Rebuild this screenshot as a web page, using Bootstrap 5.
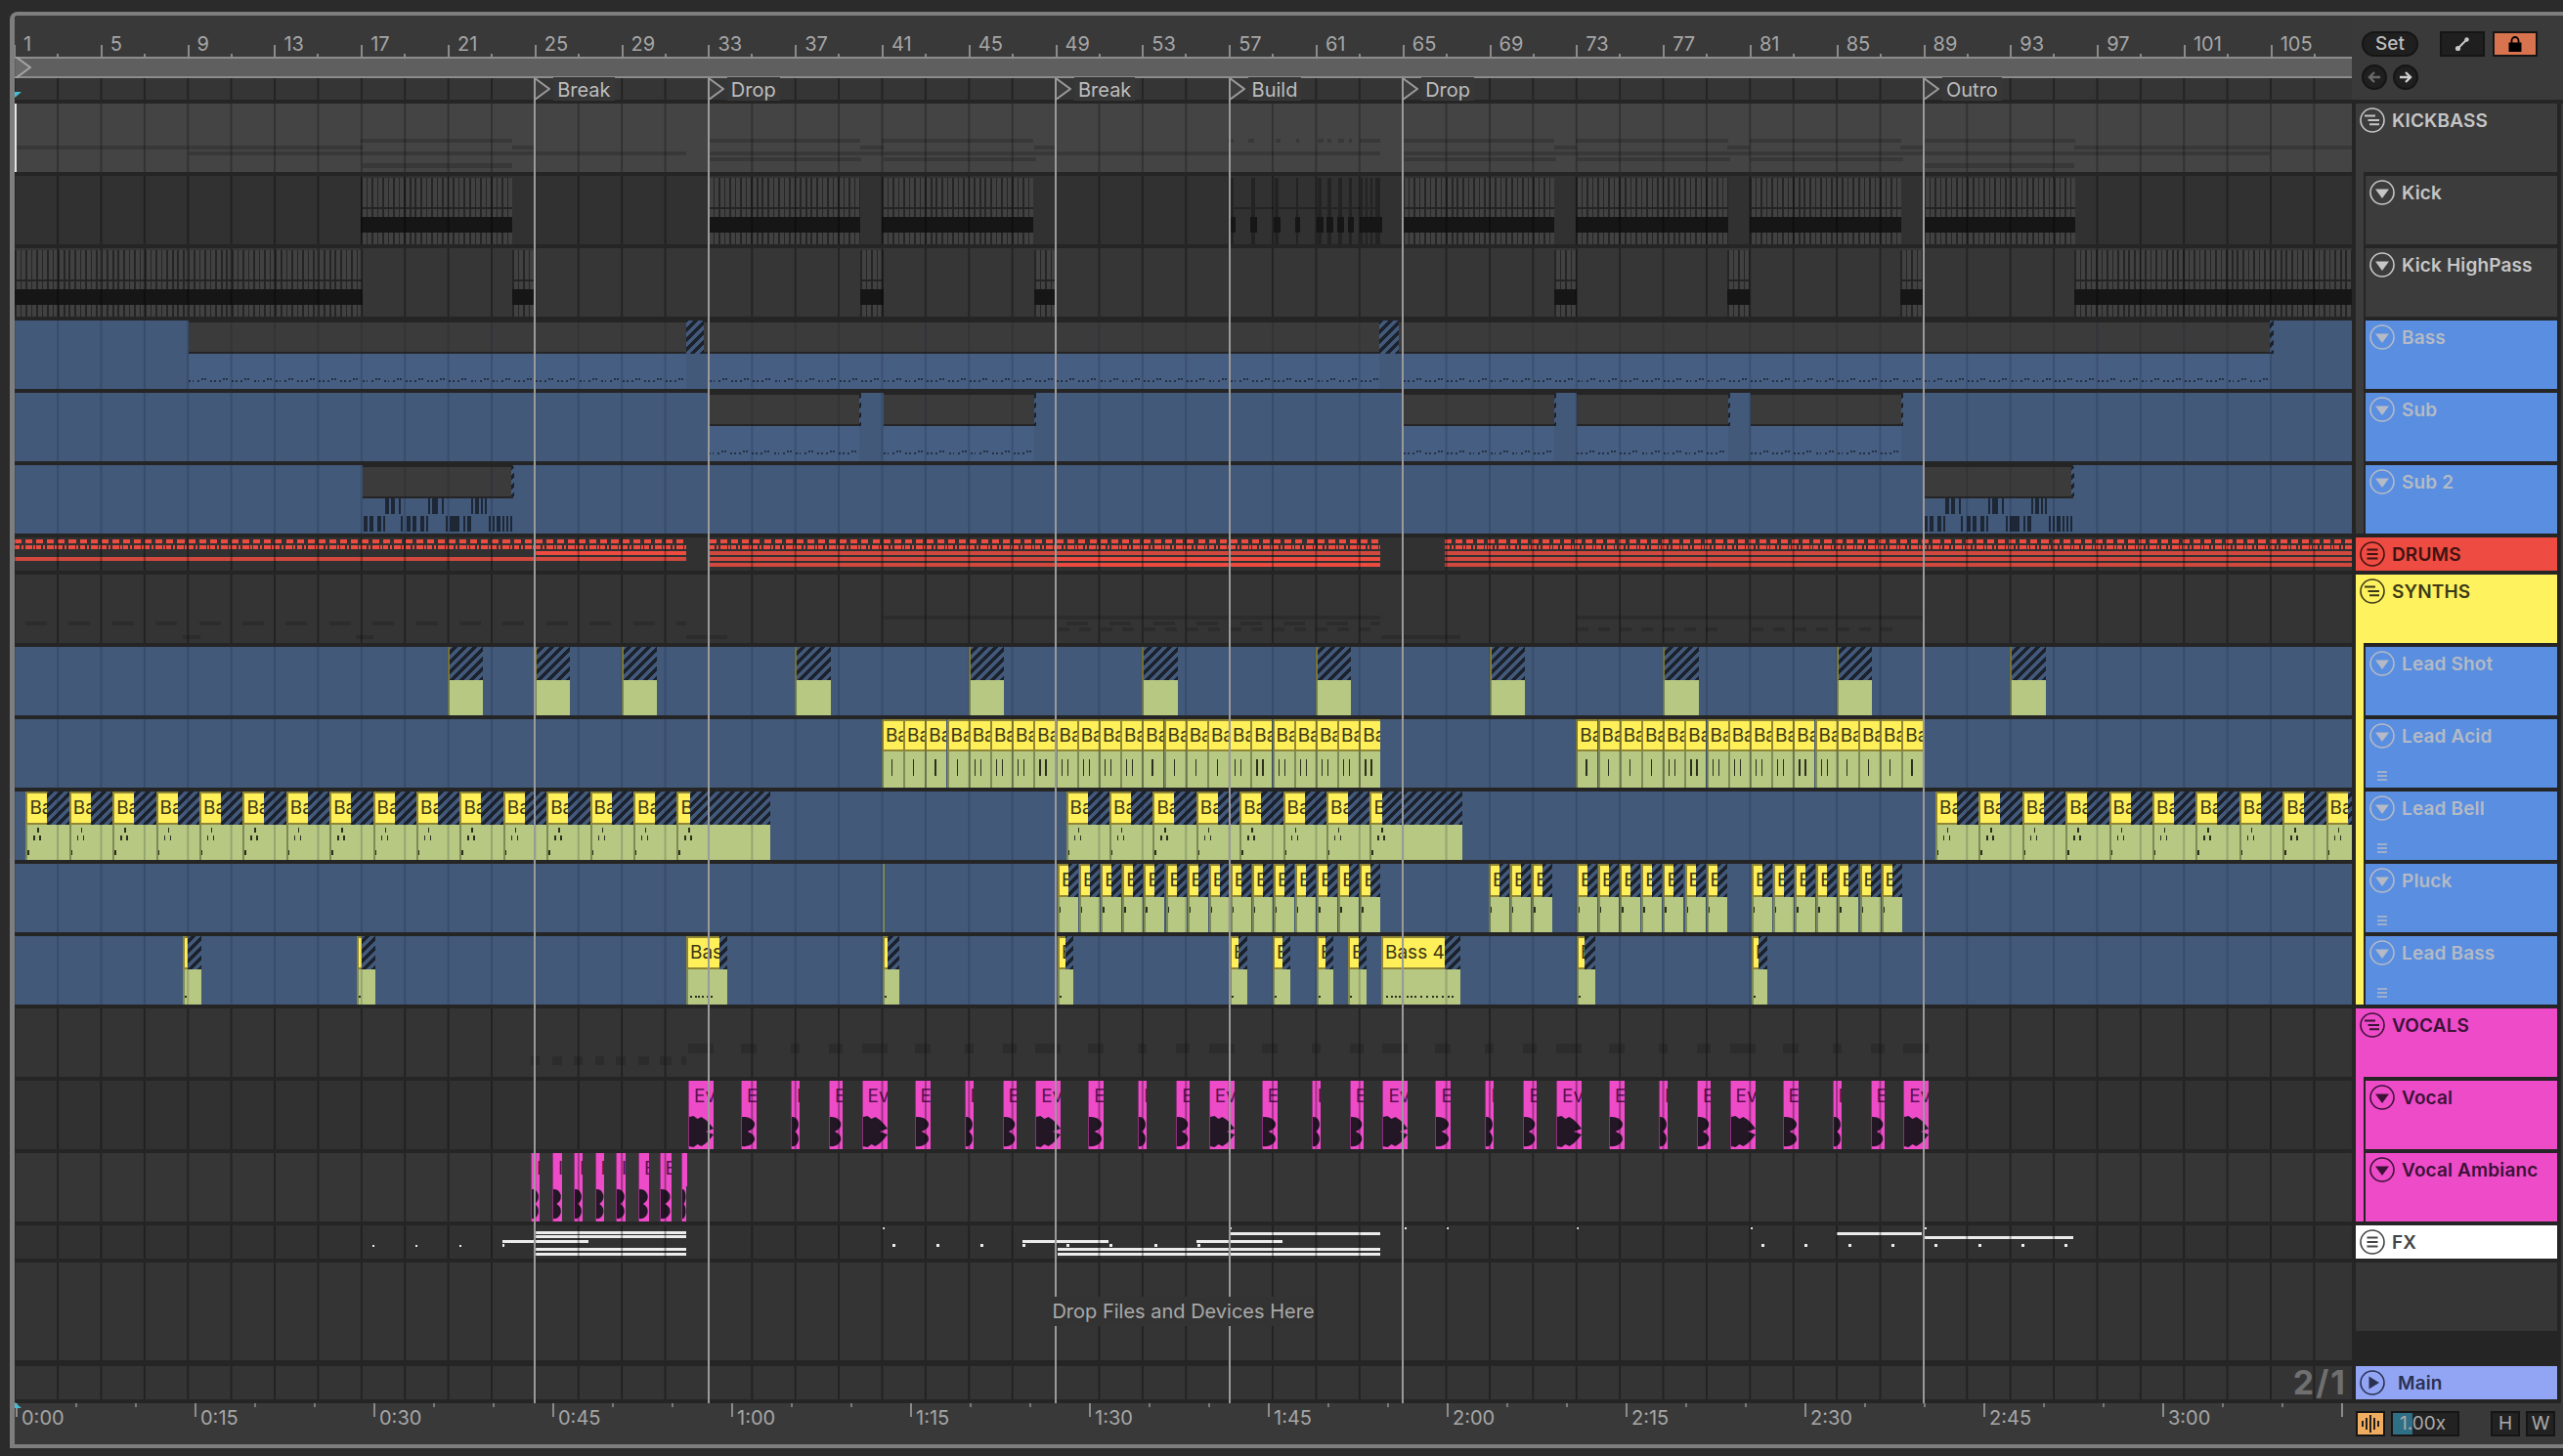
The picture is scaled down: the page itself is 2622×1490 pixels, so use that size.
<!DOCTYPE html>
<html lang="en">
<head>
<meta charset="utf-8">
<title>Arrangement</title>
<link href="https://cdn.jsdelivr.net/npm/bootstrap@5.3.0/dist/css/bootstrap.min.css" rel="stylesheet">
<style>
html,body{height:100%;margin:0;background:#2b2b2b;overflow:hidden}
body{font-family:Inter,"Liberation Sans",sans-serif;color:#bdbdbd}
.frame{position:relative;margin:12px 0 0 10px;height:1470px;width:2612px;border:solid #7e7e7e;border-width:4px 0 4px 5px;border-top-left-radius:8px;background:#252525;overflow:hidden}
.topzone{height:86px;background:#252525}
.rulers{width:2391px;flex:none}
.barruler{height:42px;background:#393939;overflow:hidden}
.rcell{flex:0 0 88.8px;height:42px;position:relative;font-size:20px;line-height:24px;color:#a6a6a6;padding:17px 0 0 10px}
.rcell:first-child{margin-left:-1px}
.rcell::before{content:"";position:absolute;left:0;top:30px;bottom:0;width:2px;background:#8a8a8a}
.rcell::after{content:"";position:absolute;left:44px;bottom:0;height:3px;width:2px;background:#8a8a8a}
.scrub{height:22px;background:#5f5f5f;border-top:2px solid #8c8c8c;border-bottom:2px solid #8c8c8c}
.locrow{height:22px;background:#353535;position:relative}
.toppanel{width:216px;margin-left:0;background:#3a3a3a;padding:16px 0 0 10px}
.tbtn{height:26px;background:#1f1f1f;border:2px solid #151515;color:#bdbdbd;font-size:19px;line-height:22px;text-align:center;font-weight:500}
.tbtn.pill{width:58px;border-radius:13px}
.tbtn.sq{width:46px}
.tbtn.ora{background:#d8734f}
.tgap1{margin-left:22px}
.tgap2{margin-left:8px}
.cbtn{width:26px;height:26px;border-radius:50%;background:#1f1f1f;border:2px solid #151515}
.cgap{margin-left:2px}
.topgap{height:4px}
.trk{height:74px}
.trk.small{height:38px}
.trk.dropz{height:106px}
.lane{position:relative;width:2391px;height:70px;margin-right:4px;flex:none;overflow:hidden;--gc:rgba(0,0,0,.34)}
.small>.lane{height:34px}
.dropz>.lane{height:100px}
.lane::after,.locrow::after{content:"";position:absolute;inset:0;pointer-events:none;background:linear-gradient(90deg,var(--gc) 0 2px,transparent 2px) -1.3px 0/44.4px 100% repeat-x}
.locrow{--gc:rgba(0,0,0,.34)}
.l-hi{background:#444;--gc:rgba(0,0,0,.26)}
.l-a{background:#313131}
.l-b{background:#363636}
.l-c{background:#343434}
.l-blue{background:#42597a;--gc:rgba(15,25,45,.2)}
.abs{position:absolute}
.ohd{background:#383838}
.kstr{background:repeating-linear-gradient(90deg,#252525 0 1.6px,#414141 1.6px 5.55px)}
.kline{background:#242424}
.kband{background:#161616}
.ktick{background:#232323}
.khd{background:#3b3b3b;border-top:2px solid #252525;border-bottom:2px solid #252525}
.klow{background:#465e82}
.bn{background:repeating-linear-gradient(90deg,rgba(28,37,53,.8) 0 2px,transparent 2px 4px,rgba(28,37,53,.8) 4px 5.5px,transparent 5.5px 9px,rgba(28,37,53,.8) 9px 11px,transparent 11px 22.2px)}
.bn2{background:repeating-linear-gradient(90deg,transparent 0 13px,rgba(28,37,53,.8) 13px 15px,transparent 15px 16px,rgba(28,37,53,.8) 16px 18px,transparent 18px 22.2px)}
.sdark{background:#1d2736}
.red1{background:repeating-linear-gradient(90deg,#ee4b40 0 7px,transparent 7px 11.1px)}
.red2{background:repeating-linear-gradient(90deg,#ee4b40 0 5px,transparent 5px 7px,#ee4b40 7px 9px,transparent 9px 11px,#ee4b40 11px 18px,transparent 18px 19px,#ee4b40 19px 21px,transparent 21px 22.2px)}
.redd{background:#d0483e}
.redb{background:#ee4b40}
.hatch{background:repeating-linear-gradient(-45deg,#1b222d 0 3.5px,#43597a 3.5px 7px)}
.hatch.edge{border-left:2px solid #8a8335}
.cy{background:#fff05a;border:solid #8e8636;border-width:2px 0 2px 2px;color:#3b3714;font-size:19px;line-height:30px;padding-left:2px;overflow:hidden;white-space:nowrap}
.cg{background:#b7c882;border-left:2px solid #7f8b57}
.nt{background:#2c2f1e}
.mg{background:#ee4bc9;color:#5c1150;font-size:19px;line-height:32px;padding-left:5px;overflow:hidden;white-space:nowrap;border-left:1px solid #8f2f7c}
.mw{background:#ee4bc9;border-left:1px solid #8f2f7c}
.mw svg{display:block;width:100%;height:100%}
.ov{background:#2c2c2c}
.wl{background:#ececec}
.drophint{font-size:20px;color:#a9a9a9;background:#333;z-index:1}
.twotop{font-size:34px;letter-spacing:2px;font-weight:700;color:#6f6f6f;line-height:34px;padding-right:5px}
.hd{width:206px;flex:none;height:100%}
.strip{width:8px;height:100%;flex:none}
.last .strip{height:70px}
.hbody{flex:1 1 auto;height:70px;min-width:0;padding-left:4px}
.small .hbody{height:34px}
.child .hbody{border-left:2px solid #252525}
.grp .hrowx{margin-left:-8px}
.hrowx{display:flex;align-items:flex-start;gap:7px;padding-top:4px}
.hrowx.wide{gap:13px}
.hname{font-size:19px;letter-spacing:.15px;font-weight:600;line-height:26px;padding-top:1px;white-space:nowrap;overflow:hidden}
.hrowx svg{flex:none}
.mini{margin:22px 0 0 8px;display:block}
.rgap{flex:1 1 auto;border-right:2px solid #3a3a3a}
.c-grey{background:#3c3c3c;color:#c6c6c6}
.c-blue{background:#5a8ee0;color:#b4bac6}
.c-red{background:#ee4b42;color:#3f1311}
.c-yel{background:#fff25f;color:#3b3a18}
.c-mag{background:#ee4bc9;color:#3c1238}
.c-wht{background:#fff;color:#444}
.c-main{background:#92a5f5;color:#2b3150}
.c-none{background:#363636}
.timeruler{height:42px;background:#393939}
.timeleft{width:2391px;flex:none;overflow:hidden;padding-left:1px}
.tcell{flex:0 0 183px;height:42px;position:relative;font-size:20px;line-height:26px;color:#a6a6a6;padding:2px 0 0 6px;white-space:nowrap}
.tcell::before{content:"";position:absolute;left:0;top:0;height:14px;width:2px;background:#8a8a8a}
.tcell::after{content:"";position:absolute;left:61px;top:0;width:63px;height:4px;border-left:2px solid #7a7a7a;border-right:2px solid #7a7a7a}
.tright{flex:1 1 auto;padding:8px 0 0 4px}
.bbtn{height:26px;background:#222;border:2px solid #151515;font-size:19px;line-height:22px;color:#aaa;text-align:center;flex:none}
.bwave{width:30px;background:#f0ad60;line-height:0}
.bspeed{width:70px;text-align:left;padding-left:7px;background:linear-gradient(90deg,#2e6f86 0 20px,#222 20px);margin-left:6px}
.bh{width:30px;margin-left:32px}
.bw{width:30px;margin-left:6px}
.locs{position:absolute;left:0;top:64px;width:2391px;height:1356px;pointer-events:none}
.locln{position:absolute;top:0;bottom:0;width:2px;background:#9a9a9a}
.locflag{position:absolute;top:0;height:22px;display:flex;align-items:center}
.locflag.first{left:0;top:-22px}
.loctxt{font-size:20px;color:#bdbdbd;background:#373737;line-height:22px;padding:2px 4px 0;margin-left:3px}
.startarrow{position:absolute;left:0;top:14px;width:0;height:0;border-right:7px solid transparent;border-top:6px solid #46bcd3}
.playline{position:absolute;left:0;top:26px;width:2px;height:70px;background:#e4e4e4}
.endarrow{position:absolute;left:0;bottom:-5px;width:0;height:0;border-right:7px solid transparent;border-bottom:6px solid #46bcd3}
</style>
</head>
<body>
<svg width="0" height="0" class="d-block" aria-hidden="true">
<symbol id="i-group" viewBox="0 0 26 26"><circle cx="13" cy="13" r="12" fill="none" stroke="currentColor" stroke-width="1.6"/><path d="M5 8.5h11M8.5 13h11.5M10 17.3h10" stroke="currentColor" stroke-width="2" fill="none"/></symbol>
<symbol id="i-lines" viewBox="0 0 26 26"><circle cx="13" cy="13" r="12" fill="none" stroke="currentColor" stroke-width="1.6"/><path d="M7.5 8.5h11M7.5 13h11M7.5 17.5h11" stroke="currentColor" stroke-width="2" fill="none"/></symbol>
<symbol id="i-down" viewBox="0 0 26 26"><circle cx="13" cy="13" r="12" fill="none" stroke="currentColor" stroke-width="1.6"/><path d="M6 9.5h14l-7 9.5z" fill="currentColor"/></symbol>
<symbol id="i-play" viewBox="0 0 26 26"><circle cx="13" cy="13" r="12" fill="none" stroke="currentColor" stroke-width="1.6"/><path d="M9.5 6.5l10.5 6.5-10.5 6.5z" fill="currentColor"/></symbol>
<symbol id="i-mini" viewBox="0 0 10 10"><path d="M0 1h10M0 5h10M0 9h10" stroke="currentColor" stroke-width="1.6"/></symbol>
</svg>

<div class="frame d-flex flex-column">
  <div class="topzone d-flex flex-none">
    <div class="rulers">
      <div class="barruler d-flex" id="barruler"></div>
      <div class="scrub"></div>
      <div class="locrow"></div>
    </div>
    <div class="toppanel">
      <div class="d-flex">
        <div class="tbtn pill">Set</div>
        <div class="tbtn sq tgap1 d-flex align-items-center justify-content-center"><svg width="16" height="16" viewBox="0 0 16 16"><path d="M3.5 12.5L12 4" stroke="#c8c8c8" stroke-width="2"/><circle cx="3.5" cy="12.5" r="2.6" fill="#c8c8c8"/><circle cx="12.5" cy="3.5" r="2.2" fill="#c8c8c8"/></svg></div>
        <div class="tbtn sq ora tgap2 d-flex align-items-center justify-content-center"><svg width="16" height="18" viewBox="0 0 16 18"><path d="M4.5 8V5.5a3.5 3.5 0 0 1 7 0V8" fill="none" stroke="#000" stroke-width="1.8"/><rect x="1.5" y="7.5" width="13" height="9.5" fill="#000"/></svg></div>
      </div>
      <div class="d-flex gap-1 mt-2">
        <div class="cbtn d-flex align-items-center justify-content-center"><svg width="16" height="14" viewBox="0 0 16 14"><path d="M14 7H4M8 2L3 7l5 5" fill="none" stroke="#6a6a6a" stroke-width="2.4"/></svg></div>
        <div class="cbtn cgap d-flex align-items-center justify-content-center"><svg width="16" height="14" viewBox="0 0 16 14"><path d="M2 7h10M8 2l5 5-5 5" fill="none" stroke="#cfcfcf" stroke-width="2.4"/></svg></div>
      </div>
    </div>
  </div>
  <div class="topgap"></div>

  <div class="trk d-flex"><div class="lane l-hi" id="l1"></div><div class="hd grp d-flex"><i class="strip c-grey"></i><div class="hbody c-grey"><div class="hrowx"><svg width="26" height="26"><use href="#i-group"/></svg><span class="hname">KICKBASS</span></div></div></div><div class="rgap"></div></div>
  <div class="trk d-flex"><div class="lane l-a" id="l2"></div><div class="hd child d-flex"><i class="strip c-grey"></i><div class="hbody c-grey"><div class="hrowx"><svg width="26" height="26"><use href="#i-down"/></svg><span class="hname">Kick</span></div></div></div><div class="rgap"></div></div>
  <div class="trk d-flex"><div class="lane l-b" id="l3"></div><div class="hd child d-flex"><i class="strip c-grey"></i><div class="hbody c-grey"><div class="hrowx"><svg width="26" height="26"><use href="#i-down"/></svg><span class="hname">Kick HighPass</span></div></div></div><div class="rgap"></div></div>
  <div class="trk d-flex"><div class="lane l-blue" id="l4"></div><div class="hd child d-flex"><i class="strip c-grey"></i><div class="hbody c-blue"><div class="hrowx"><svg width="26" height="26"><use href="#i-down"/></svg><span class="hname">Bass</span></div></div></div><div class="rgap"></div></div>
  <div class="trk d-flex"><div class="lane l-blue" id="l5"></div><div class="hd child d-flex"><i class="strip c-grey"></i><div class="hbody c-blue"><div class="hrowx"><svg width="26" height="26"><use href="#i-down"/></svg><span class="hname">Sub</span></div></div></div><div class="rgap"></div></div>
  <div class="trk d-flex"><div class="lane l-blue" id="l6"></div><div class="hd child last d-flex"><i class="strip c-grey"></i><div class="hbody c-blue"><div class="hrowx"><svg width="26" height="26"><use href="#i-down"/></svg><span class="hname">Sub 2</span></div></div></div><div class="rgap"></div></div>

  <div class="trk small d-flex"><div class="lane l-a" id="l7"></div><div class="hd d-flex"><div class="hbody c-red"><div class="hrowx"><svg width="26" height="26"><use href="#i-lines"/></svg><span class="hname">DRUMS</span></div></div></div><div class="rgap"></div></div>

  <div class="trk d-flex"><div class="lane l-c" id="l8"></div><div class="hd grp d-flex"><i class="strip c-yel"></i><div class="hbody c-yel"><div class="hrowx"><svg width="26" height="26"><use href="#i-group"/></svg><span class="hname">SYNTHS</span></div></div></div><div class="rgap"></div></div>
  <div class="trk d-flex"><div class="lane l-blue" id="l9"></div><div class="hd child d-flex"><i class="strip c-yel"></i><div class="hbody c-blue"><div class="hrowx"><svg width="26" height="26"><use href="#i-down"/></svg><span class="hname">Lead Shot</span></div></div></div><div class="rgap"></div></div>
  <div class="trk d-flex"><div class="lane l-blue" id="l10"></div><div class="hd child d-flex"><i class="strip c-yel"></i><div class="hbody c-blue"><div class="hrowx"><svg width="26" height="26"><use href="#i-down"/></svg><span class="hname">Lead Acid</span></div><svg class="mini" width="10" height="10"><use href="#i-mini"/></svg></div></div><div class="rgap"></div></div>
  <div class="trk d-flex"><div class="lane l-blue" id="l11"></div><div class="hd child d-flex"><i class="strip c-yel"></i><div class="hbody c-blue"><div class="hrowx"><svg width="26" height="26"><use href="#i-down"/></svg><span class="hname">Lead Bell</span></div><svg class="mini" width="10" height="10"><use href="#i-mini"/></svg></div></div><div class="rgap"></div></div>
  <div class="trk d-flex"><div class="lane l-blue" id="l12"></div><div class="hd child d-flex"><i class="strip c-yel"></i><div class="hbody c-blue"><div class="hrowx"><svg width="26" height="26"><use href="#i-down"/></svg><span class="hname">Pluck</span></div><svg class="mini" width="10" height="10"><use href="#i-mini"/></svg></div></div><div class="rgap"></div></div>
  <div class="trk d-flex"><div class="lane l-blue" id="l13"></div><div class="hd child last d-flex"><i class="strip c-yel"></i><div class="hbody c-blue"><div class="hrowx"><svg width="26" height="26"><use href="#i-down"/></svg><span class="hname">Lead Bass</span></div><svg class="mini" width="10" height="10"><use href="#i-mini"/></svg></div></div><div class="rgap"></div></div>

  <div class="trk d-flex"><div class="lane l-c" id="l14"></div><div class="hd grp d-flex"><i class="strip c-mag"></i><div class="hbody c-mag"><div class="hrowx"><svg width="26" height="26"><use href="#i-group"/></svg><span class="hname">VOCALS</span></div></div></div><div class="rgap"></div></div>
  <div class="trk d-flex"><div class="lane l-a" id="l15"></div><div class="hd child d-flex"><i class="strip c-mag"></i><div class="hbody c-mag"><div class="hrowx"><svg width="26" height="26"><use href="#i-down"/></svg><span class="hname">Vocal</span></div></div></div><div class="rgap"></div></div>
  <div class="trk d-flex"><div class="lane l-b" id="l16"></div><div class="hd child last d-flex"><i class="strip c-mag"></i><div class="hbody c-mag"><div class="hrowx"><svg width="26" height="26"><use href="#i-down"/></svg><span class="hname">Vocal Ambianc</span></div></div></div><div class="rgap"></div></div>

  <div class="trk small d-flex"><div class="lane l-a" id="l17"></div><div class="hd d-flex"><div class="hbody c-wht"><div class="hrowx"><svg width="26" height="26"><use href="#i-lines"/></svg><span class="hname">FX</span></div></div></div><div class="rgap"></div></div>

  <div class="trk dropz d-flex"><div class="lane l-c d-flex align-items-center justify-content-center"><span class="drophint">Drop Files and Devices Here</span></div><div class="hd d-flex"><div class="hbody c-none"></div></div><div class="rgap"></div></div>

  <div class="trk small d-flex"><div class="lane l-c d-flex justify-content-end"><span class="twotop">2/1</span></div><div class="hd d-flex"><div class="hbody c-main"><div class="hrowx wide"><svg width="26" height="26"><use href="#i-play"/></svg><span class="hname">Main</span></div></div></div><div class="rgap"></div></div>

  <div class="timeruler d-flex">
    <div class="timeleft d-flex" id="timeruler"></div>
    <div class="tright d-flex">
      <div class="bbtn bwave d-flex align-items-center justify-content-center"><svg width="20" height="18" viewBox="0 0 20 18"><path d="M2 6v6M6 3v12M10 0v18M14 3v12M18 6v6" stroke="#222" stroke-width="2"/></svg></div>
      <div class="bbtn bspeed">1.00x</div>
      <div class="bbtn bh">H</div>
      <div class="bbtn bw">W</div>
    </div>
  </div>

  <div class="locs" id="locs">
    <i class="startarrow"></i>
    <i class="playline"></i>
    <i class="endarrow"></i>
  </div>
</div>

<script src="https://cdn.jsdelivr.net/npm/bootstrap@5.3.0/dist/js/bootstrap.bundle.min.js"></script>
<script>
(function(){
const X=b=>13.9+(b-1)*22.2, OX=15;
const $=id=>document.getElementById(id);
function add(l,x0,x1,y0,y1,cls,txt){
  const d=document.createElement('div');
  d.className='abs '+cls;
  d.style.left=(x0-OX)+'px';d.style.width=(x1-x0)+'px';
  d.style.top=y0+'px';d.style.height=(y1-y0)+'px';
  if(txt)d.textContent=txt;
  $(l).appendChild(d);return d;
}
/* rulers */
for(let b=1;b<=105;b+=4){const c=document.createElement('div');c.className='rcell';c.textContent=b;$('barruler').appendChild(c);}
for(let k=0;k<14;k++){const c=document.createElement('div');c.className='tcell';
  if(k<13)c.textContent=Math.floor(k/4)+':'+String((k%4)*15).padStart(2,'0');$('timeruler').appendChild(c);}
/* locators */
[['Break',25],['Drop',33],['Break',49],['Build',57],['Drop',65],['Outro',89]].forEach(([t,b])=>{
  const x=X(b)-OX;
  const ln=document.createElement('i');ln.className='locln';ln.style.left=(x-0.5)+'px';$('locs').appendChild(ln);
  const f=document.createElement('div');f.className='locflag';f.style.left=(x-0.5)+'px';
  f.innerHTML='<svg width="17" height="22" viewBox="0 0 17 22"><path d="M1 0L16 11 1 22z" fill="#3d3d3d" stroke="#9a9a9a" stroke-width="2"/></svg><span class="loctxt">'+t+'</span>';
  $('locs').appendChild(f);
});
const sf=document.createElement('div');sf.className='locflag first';
sf.innerHTML='<svg width="17" height="22" viewBox="0 0 17 22"><path d="M1 0L16 11 1 22" fill="#6a6a6a" stroke="#a4a4a4" stroke-width="2"/></svg>';
$('locs').appendChild(sf);

/* KICKBASS overview */
const kick=[[17,24],[33,40],[41,48],[65,72],[73,80],[81,88],[89,96]];
const hp=[[15,371],[524,547],[880,904],[1058,1080],[1590,1613],[1767,1790],[1944,1967],[2122,2406]];
const subs=[[725,881],[904,1060],[1436,1592],[1613,1770],[1791,1947]];
kick.forEach(([a,b])=>add('l1',X(a),X(b),36,40,'ohd'));
[[1256,1262],[1277,1283],[1305,1310],[1326,1329],[1348,1354],[1358,1362],[1369,1375],[1380,1383],[1391,1412]].forEach(([a,b])=>add('l1',a,b,36,40,'ohd'));
hp.forEach(([a,b])=>add('l1',a,b,43,47,'ohd'));
[[193,702],[726,1412],[1436,2322]].forEach(([a,b])=>add('l1',a,b,49,53,'ohd'));
subs.forEach(([a,b])=>add('l1',a,b,55,59,'ohd'));
[[371,524],[1967,2122]].forEach(([a,b])=>add('l1',a,b,61,66,'ohd'));

/* Kick + HighPass */
function kpat(l,a,b){
  add(l,a,b,2,70,'kstr');add(l,a,b,32,34,'kline');add(l,a,b,42,58,'kband');
}
kick.forEach(([a,b])=>kpat('l2',X(a),X(b)));
[[1258,4],[1280,4],[1304,4],[1326,2],[1348,4],[1358,4],[1369,4],[1380,3],[1392,2],[1397,2],[1402,2],[1407,5]].forEach(([x,w])=>{
  add('l2',x,x+w,2,70,'ktick');add('l2',x-1,x+w+2,42,58,'kband');
});
add('l2',1258,1412,32,34,'kline');
hp.forEach(([a,b])=>kpat('l3',a,b));

/* Bass */
function head(l,a,b){add(l,a,b,0,34,'khd');}
function low(l,a,b){add(l,a,b,34,70,'klow');add(l,a,b,61,63,'bn');add(l,a,b,59,61,'bn2');}
[[193,702],[720,1411],[1431,2322]].forEach(([a,b])=>head('l4',a,b));
[[193,702],[726,1411],[1436,2322]].forEach(([a,b])=>low('l4',a,b));
[[702,720],[1411,1431],[2322,2326]].forEach(([a,b])=>add('l4',a,b,0,34,'hatch'));
/* Sub */
subs.forEach(([a,b])=>{head('l5',a,b);low('l5',a,b-2);add('l5',b-2,b,2,34,'hatch');});
/* Sub 2 */
const s2a=[[394,398],[400,404],[408,410],[438,440],[442,448],[452,454],[482,484],[486,490],[492,494],[496,498]];
const s2b=[[372,376],[378,382],[386,390],[392,394],[410,412],[416,420],[422,426],[430,434],[436,438],[456,458],[460,470],[474,476],[478,482],[500,502],[504,506],[508,512],[514,516],[518,520],[522,524]];
[371,1967].forEach(o=>{
  head('l6',o,o+154);add('l6',o+152,o+155,2,32,'hatch');
  s2a.forEach(([a,b])=>add('l6',a-371+o,b-371+o,34,50,'sdark'));
  s2b.forEach(([a,b])=>add('l6',a-371+o,b-371+o,52,68,'sdark'));
});

/* Drums */
[[15,702],[726,1412],[1478,2406]].forEach(([a,b])=>{
  add('l7',a,b,2,6,'red1');add('l7',a,b,8,12,'red2');
});
add('l7',15,547,20,24,'redd');add('l7',547,702,14,18,'redb');add('l7',547,702,20,24,'redd');
add('l7',726,1080,14,18,'redd');add('l7',726,1080,20,24,'redd');add('l7',726,1080,26,30,'redd');
add('l7',1080,1412,14,18,'redd');add('l7',1080,1412,20,24,'redb');add('l7',1080,1412,26,30,'redb');
add('l7',1478,2406,14,18,'redd');add('l7',1478,2406,20,24,'redd');add('l7',1478,2406,26,30,'redd');

/* Synths overview */
function dashes(l,from,to,pitch,w,y0,y1){for(let x=from;x<to;x+=pitch)add(l,x,Math.min(x+w,to),y0,y1,'ov');}
dashes('l8',26,702,44.4,22,48,52);
dashes('l8',1091,1412,44.4,22,48,52);
add('l8',904,1412,42,46,'ov');
dashes('l8',1082,1410,22,12,54,58);
add('l8',702,744,62,66,'ov');add('l8',1413,1494,62,66,'ov');
add('l8',1613,1968,42,46,'ov');dashes('l8',1613,1766,22,12,54,58);dashes('l8',1792,1944,22,12,54,58);
[187,364].forEach(x=>add('l8',x,x+18,62,66,'ov'));

/* synth clip */
function sc(l,x0,x1,yEnd,h,label){
  if(yEnd>x0){add(l,x0,yEnd,0,h,'cy',label);}
  if(x1>yEnd){add(l,yEnd,x1,0,h,'hatch'+(yEnd<=x0?' edge':''));}
  add(l,x0,x1,h,70,'cg');
}
function nt(l,x,w,y0,y1){add(l,x,x+w,y0,y1,'nt');}
/* Lead Shot */
[21,25,29,37,45,53,61,69,77,85,93].forEach(b=>sc('l9',X(b),X(b)+36.5,X(b),34));
/* Lead Acid */
function acid(a,b){for(let i=a;i<b;i++){const x=X(i);sc('l10',x,x+22.2,x+22.2,33,'Ba');
  const k=(i-a)%12;(k<4?[10]:[6,12]).forEach(t=>nt('l10',x+t,1.4,41,58));}}
acid(41,64);acid(73,89);
/* Lead Bell */
function bell(x){nt('l11',x+12,1.4,37,42);nt('l11',x+8,1.4,45,50);nt('l11',x+14,1.4,45,50);nt('l11',x+2,1.4,60,65);}
function bellrun(start,count,lastY,end){for(let i=0;i<count;i++){const x=start+i*44.4;
    if(i==count-1){sc('l11',x,end,x+lastY,34,'B');}else{sc('l11',x,x+44.4,x+22,34,'Ba');}bell(x);}}
bellrun(26.4,16,14,788);
bellrun(1090.6,8,13,1496);
for(let i=0;i<10;i++){const x=1980+i*44.4;sc('l11',x,Math.min(x+44.4,2406),x+22,34,'Ba');bell(x);}
/* Pluck */
function pluck(a,n){for(let i=0;i<n;i++){const x=a+i*22.1;sc('l12',x,x+21,x+11,34,'B');nt('l12',x+2,1.4,44,50);}}
pluck(1082,15);pluck(1523,3);pluck(1613,7);pluck(1792,7);
add('l12',903,904.5,0,70,'cg');
/* Lead Bass */
[[187,206,5],[364.5,384,5],[903,920,5],[1082,1098,8],[1258,1276,9],[1302,1320,10],[1347,1364,9],[1379,1398,11],[1613,1632,8],[1792,1808,7]].forEach(([a,b,y])=>{
  sc('l13',a,b,a+y,34,'B');nt('l13',a+2,2,61,63);});
sc('l13',702,744,736,34,'Bas');sc('l13',1413,1494,1478,34,'Bass 4');
[4,9,12,16,21,25].forEach(d=>nt('l13',702+d,2,61,63));
[5,10,14,18,26,30,34,40,46,52,56,62,68,72].forEach(d=>nt('l13',1413+d,2,61,63));

/* Vocals */
const WIDE='M0 3L18 2 34 5 50 3 68 6 84 10 100 15 68 18 100 21 84 26 68 30 50 33 34 31 18 34 0 33Z';
const NARROW='M0 3Q62 2 86 9Q94 15 38 18Q94 21 86 27Q62 34 0 33Z';
function wave(l,a,b){
  const d=add(l,a,b,34,70,'mw');
  d.innerHTML='<svg viewBox="0 0 100 36" preserveAspectRatio="none"><path fill="#231726" d="'+((b-a)>20?WIDE:NARROW)+'"/></svg>';
}
const pat=[[0,26],[54,70],[105,114],[144,158]];
const voc=[];for(let k=0;k<8;k++){pat.forEach((p,i)=>{if(k<7||i==0)voc.push([704+k*177.6+p[0],704+k*177.6+p[1],i==0?'Ev':'E']);});}
voc.forEach(([a,b,t])=>{add('l15',a,b,0,34,'mg',t);wave('l15',a,b);add('l14',a,b,36,46,'ov');});
const amb=[[543,552],[565,575],[587,596],[608.5,618],[630,640],[653,664],[674.5,686.5],[697,702]];
amb.forEach(([a,b],i)=>{add('l16',a,b,0,34,'mg',i==5||i==6?'E':'I');wave('l16',a,b);add('l14',a,b,49,58,'ov');});

/* FX */
function fx(a,b,y,h){add('l17',a,b,y-1254,y-1254+(h||3),'wl');}
fx(548,702,1260);fx(548,702,1264);fx(548,702,1277);fx(548,702,1282);fx(514,602,1269);fx(514,516,1273,3);
[381,425,470].forEach(x=>fx(x,x+2,1274,2));
[913,958,1003,1046,1091,1135,1181,1225].forEach(x=>fx(x,x+3,1273,3));
fx(903,905,1256,2);
fx(1046,1134,1269);fx(1224,1312,1269);fx(1082,1412,1277);fx(1082,1412,1282);fx(1258,1412,1261);fx(1258,1260,1256,2);
fx(1879,1966,1261);fx(1968,2121,1265);
[1802,1846,1891,1935,1979,2024,2068,2112].forEach(x=>fx(x,x+3,1273,3));
[1437,1480,1613,1791,1969].forEach(x=>fx(x,x+2,1256,2));
})();
</script>
</body>
</html>
